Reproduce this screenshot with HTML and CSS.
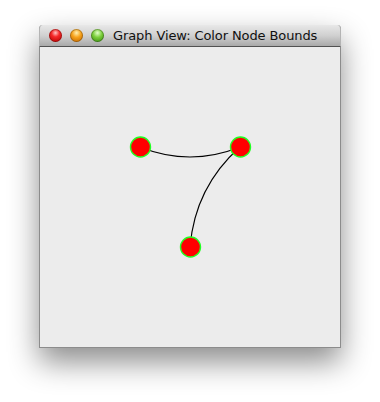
FILE: index.html
```html
<!DOCTYPE html>
<html lang="en">
<head>
    <meta charset="UTF-8">
    <title>Graph View: Color Node Bounds</title>
    <link rel="stylesheet" href="styles.css">
</head>
<body>
    <div class="desktop">
        <div class="window">
            <div class="titlebar">
                <div class="lights">
                    <span class="light red"></span>
                    <span class="light orange"></span>
                    <span class="light green"></span>
                </div>
                <span class="title">Graph View: Color Node Bounds</span>
            </div>
            <div class="content">
                <svg class="graph" width="300" height="300" viewBox="0 0 300 300">
                    <path d="M100 100 Q150 120 200 100" class="edge"/>
                    <path d="M200 100 Q155 140 150 200" class="edge"/>
                    <circle cx="100.5" cy="100" r="10" class="node"/>
                    <circle cx="200.5" cy="100" r="10" class="node"/>
                    <circle cx="150.5" cy="200" r="10" class="node"/>
                </svg>
            </div>
        </div>
    </div>
</body>
</html>
```

FILE: styles.css
```css
html, body {
    margin: 0;
    background: #ffffff;
}

.desktop {
    min-height: 402px;
    box-sizing: border-box;
    padding: 25px 0 0 39px;
}

.window {
    width: 300px;
    border: 1px solid #8c8c8c;
    border-top: none;
    border-radius: 4px 4px 0 0;
    box-shadow: 0 14px 30px rgba(0, 0, 0, 0.45);
}

.titlebar {
    height: 21px;
    display: flex;
    align-items: center;
    padding-left: 9px;
    border-bottom: 1px solid #515151;
    border-radius: 4px 4px 0 0;
    background: linear-gradient(#e8e8e8, #d0d0d0 50%, #a9a9a9);
    margin: 0 -1px;
    border-left: 1px solid #b4b4b4;
    border-right: 1px solid #b4b4b4;
}

.lights {
    display: flex;
    gap: 8px;
}

.light {
    width: 13px;
    height: 13px;
    border-radius: 50%;
    box-shadow: inset 0 0 0 1px rgba(0, 0, 0, 0.25);
}

.red {
    background: radial-gradient(circle at 50% 30%, #ffc4c4 0, #f52a2a 35%, #b80000 90%);
}

.orange {
    background: radial-gradient(circle at 50% 30%, #fff0b0 0, #f7a21b 40%, #c46a00 90%);
}

.green {
    background: radial-gradient(circle at 50% 30%, #e0ffc8 0, #7ccf3b 40%, #3c8f12 90%);
}

.title {
    margin-left: 9px;
    font-family: "DejaVu Sans", sans-serif;
    font-size: 13px;
    color: #111;
    letter-spacing: -0.1px;
}

.content {
    height: 300px;
    background: #ececec;
}

.graph {
    display: block;
}

.edge {
    fill: none;
    stroke: #000;
    stroke-width: 1.1;
}

.node {
    fill: #ff0000;
    stroke: #22ff22;
    stroke-width: 1.4;
}
```
